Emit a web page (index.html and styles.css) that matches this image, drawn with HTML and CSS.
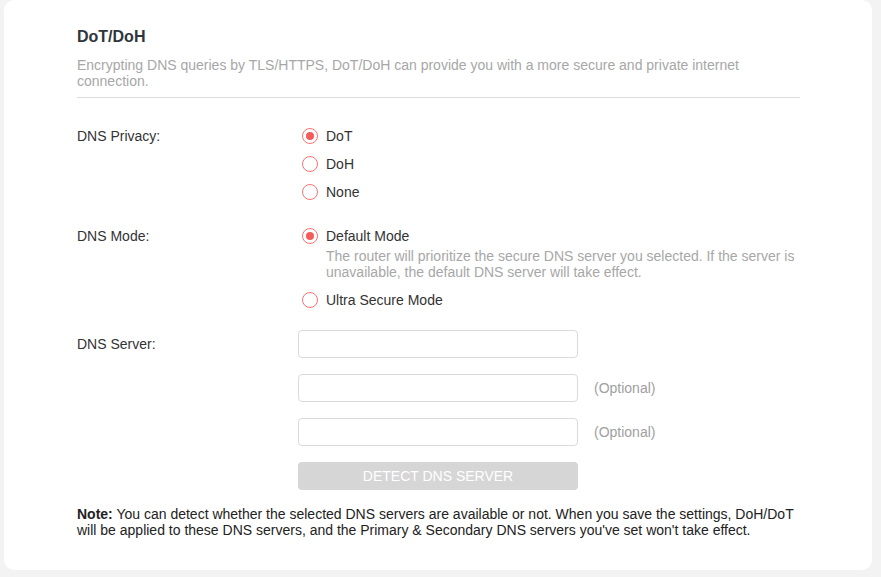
FILE: index.html
```html
<!DOCTYPE html>
<html>
<head>
  <link rel="stylesheet" href="styles.css">
</head>
<body>
  <div class="card">
    <h2 class="title">DoT/DoH</h2>
    <p class="intro">Encrypting DNS queries by TLS/HTTPS, DoT/DoH can provide you with a more secure and private internet connection.</p>
    <hr class="divider">

    <div class="field privacy">
      <div class="label">DNS Privacy:</div>
      <div class="options">
        <label class="option"><input type="radio" name="privacy" checked> DoT</label>
        <label class="option"><input type="radio" name="privacy"> DoH</label>
        <label class="option"><input type="radio" name="privacy"> None</label>
      </div>
    </div>

    <div class="field mode">
      <div class="label">DNS Mode:</div>
      <div class="options">
        <label class="option"><input type="radio" name="mode" checked> Default Mode</label>
        <p class="hint">The router will prioritize the secure DNS server you selected. If the server is unavailable, the default DNS server will take effect.</p>
        <label class="option"><input type="radio" name="mode"> Ultra Secure Mode</label>
      </div>
    </div>

    <div class="field server">
      <div class="label">DNS Server:</div>
      <div class="inputs">
        <div class="row"><input type="text" class="text"></div>
        <div class="row"><input type="text" class="text"><span class="optional">(Optional)</span></div>
        <div class="row"><input type="text" class="text"><span class="optional">(Optional)</span></div>
        <div class="row"><button class="detect" disabled>DETECT DNS SERVER</button></div>
      </div>
    </div>

    <p class="note"><b>Note:</b> You can detect whether the selected DNS servers are available or not. When you save the settings, DoH/DoT will be applied to these DNS servers, and the Primary &amp; Secondary DNS servers you've set won't take effect.</p>
  </div>
</body>
</html>
```

FILE: styles.css
```css
body {
  margin: 0;
  background-color: #f3f3f3;
  font-family: "Liberation Sans", Arial, sans-serif;
  font-size: 14px;
  color: #333;
}
.card {
  box-sizing: border-box;
  width: 868px;
  height: 570px;
  margin-left: 4px;
  padding: 27px 72px 0 73px;
  background-color: #fff;
  border-radius: 0 0 10px 10px;
  border-top-left-radius: 10px;
  border-top-right-radius: 10px;
}
.title {
  margin: 0;
  font-size: 16px;
  line-height: 20px;
  color: #2f363c;
}
.intro {
  margin: 10px 0 0;
  line-height: 16px;
  color: #a7a7a7;
}
.divider {
  margin: 8px 0 0;
  border: 0;
  border-top: 1px solid #dcdcdc;
}
.field {
  display: flex;
}
.label {
  width: 221px;
  flex-shrink: 0;
  line-height: 20px;
}
.options {
  display: flex;
  flex-direction: column;
  flex: 1;
}
.privacy {
  margin-top: 28px;
}
.privacy .options {
  gap: 8px;
}
.mode {
  margin-top: 24px;
}
.option {
  display: flex;
  align-items: center;
  height: 20px;
  padding-left: 4px;
}
.option input {
  appearance: none;
  box-sizing: border-box;
  width: 16px;
  height: 16px;
  margin: 0 8px 0 0;
  border: 1.5px solid #f47373;
  border-radius: 50%;
  display: grid;
  place-items: center;
}
.option input:checked::after {
  content: "";
  width: 8px;
  height: 8px;
  border-radius: 50%;
  background-color: #f45b5b;
}
.hint {
  margin: 2px 0 10px 28px;
  line-height: 16px;
  color: #a7a7a7;
}
.server {
  margin-top: 20px;
}
.server .label {
  line-height: 28px;
}
.inputs {
  display: flex;
  flex-direction: column;
  gap: 16px;
}
.row {
  display: flex;
  align-items: center;
}
.text {
  box-sizing: border-box;
  width: 280px;
  height: 28px;
  margin: 0;
  border: 1px solid #dadada;
  border-radius: 4px;
}
.optional {
  margin-left: 16px;
  color: #a0a0a0;
}
.detect {
  width: 280px;
  height: 28px;
  border: 0;
  border-radius: 4px;
  background-color: #d6d6d6;
  color: #fff;
  font-family: "Liberation Sans", Arial, sans-serif;
  font-size: 14px;
}
.note {
  margin: 16px 0 0;
  line-height: 16px;
  color: #222;
}
```
